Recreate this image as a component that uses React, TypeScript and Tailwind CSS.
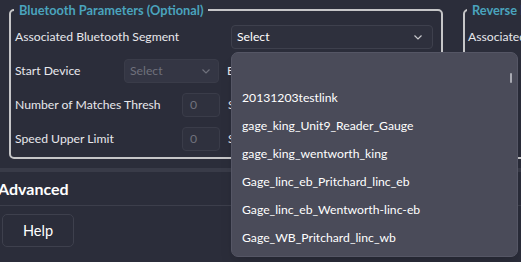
import React from "react";

const font = { fontFamily: 'Lato, "Noto Sans", sans-serif' };

const items = [
  "",
  "20131203testlink",
  "gage_king_Unit9_Reader_Gauge",
  "gage_king_wentworth_king",
  "Gage_linc_eb_Pritchard_linc_eb",
  "Gage_linc_eb_Wentworth-linc-eb",
  "Gage_WB_Pritchard_linc_wb",
];

const Chevron = ({ className }: { className?: string }) => (
  <svg viewBox="0 0 12 12" className={className} fill="none" stroke="currentColor" strokeWidth="1.2">
    <path d="M2.5 4.5 6 8l3.5-3.5" />
  </svg>
);

const Row = ({
  label,
  labelClass,
  children,
  tail,
}: {
  label: string;
  labelClass?: string;
  children?: React.ReactNode;
  tail?: string;
}) => (
  <div className="flex items-center h-[34px]">
    <span className={`text-[12.2px] leading-[16px] pb-[1px] text-[#e8e8ec] whitespace-nowrap shrink-0 ${labelClass ?? ""}`}>
      {label}
    </span>
    {children}
    {tail && <span className="ml-[8px] text-[12.2px] text-[#e8e8ec]">{tail}</span>}
  </div>
);

export default function App() {
  return (
    <div className="relative w-[521px] h-[262px] overflow-hidden bg-[#2b2d3a] text-[#e8e8ec]" style={font}>
      <div className="flex gap-[20px] pl-[9px] pt-[2px] w-[800px]">
        <fieldset className="w-[434px] h-[157px] shrink-0 border-2 border-[#c6c6c8] rounded-[5px] px-[4px] pt-[2px]">
          <legend className="-ml-[1px] px-[5px] text-[12.8px] font-bold text-[#4aa3bd] leading-[16px]">
            Bluetooth Parameters (Optional)
          </legend>
          <Row label="Associated Bluetooth Segment">
            <div className="ml-auto mr-[4px] w-[202px] h-[24px] flex items-center justify-between pl-[5px] pr-[8px] rounded-[4px] border border-[#3e404d] bg-[#2e303d] text-[12.2px] text-white">
              Select
              <Chevron className="w-[12px] h-[12px] text-[#c8c8cc]" />
            </div>
          </Row>
          <Row label="Start Device" labelClass="w-[109px]" tail="E">
            <div className="w-[95px] h-[24px] flex items-center justify-between pl-[5px] pr-[6px] rounded-[4px] border border-[#3a3c49] bg-[#343644] text-[12.2px] text-[#6f717c]">
              Select
              <Chevron className="w-[12px] h-[12px] text-[#6f717c]" />
            </div>
          </Row>
          <Row label="Number of Matches Thresh" labelClass="w-[167px]" tail="S">
            <div className="w-[38px] h-[24px] flex items-center pl-[7px] rounded-[4px] border border-[#3a3c49] bg-[#2f313e] text-[12.2px] text-[#6f717c]">
              0
            </div>
          </Row>
          <Row label="Speed Upper Limit" labelClass="w-[167px]" tail="S">
            <div className="w-[38px] h-[24px] flex items-center pl-[7px] rounded-[4px] border border-[#3a3c49] bg-[#2f313e] text-[12.2px] text-[#6f717c]">
              0
            </div>
          </Row>
        </fieldset>
        <fieldset className="w-[300px] h-[157px] shrink-0 border-2 border-[#c6c6c8] rounded-[5px] px-[4px] pt-[2px]">
          <legend className="-ml-[2px] px-[5px] text-[12.8px] font-bold text-[#4aa3bd] leading-[16px]">
            Reverse Bluetooth Parameters
          </legend>
          <Row label="Associated Bluetooth Segment" labelClass="-ml-[1px]" />
        </fieldset>
      </div>

      <div className="mt-[9px] h-[4px] bg-[#393b48]" />
      <div className="h-[33px] flex items-center -ml-[2px] text-[16px] font-bold text-white">Advanced</div>
      <div className="h-px bg-[#3c3e4b]" />
      <div className="pt-[8px] pl-[2px]">
        <button className="w-[72px] h-[33px] rounded-[5px] border border-[#3e404d] bg-[#2b2d3a] text-[14.5px] text-white">
          Help
        </button>
      </div>

      <div className="absolute left-[231px] top-[52px] w-[287px] h-[205px] rounded-[7px] bg-[#4a4b59] border border-[#555665] pt-[3px] shadow-lg">
        {items.map((t, i) => (
          <div key={i} className="h-[28px] flex items-center pl-[10px] text-[12.2px] text-white whitespace-nowrap">
            {t}
          </div>
        ))}
        <div className="absolute right-[5px] top-[20px] w-[2px] h-[10px] rounded bg-[#a9aab3]" />
      </div>
    </div>
  );
}
